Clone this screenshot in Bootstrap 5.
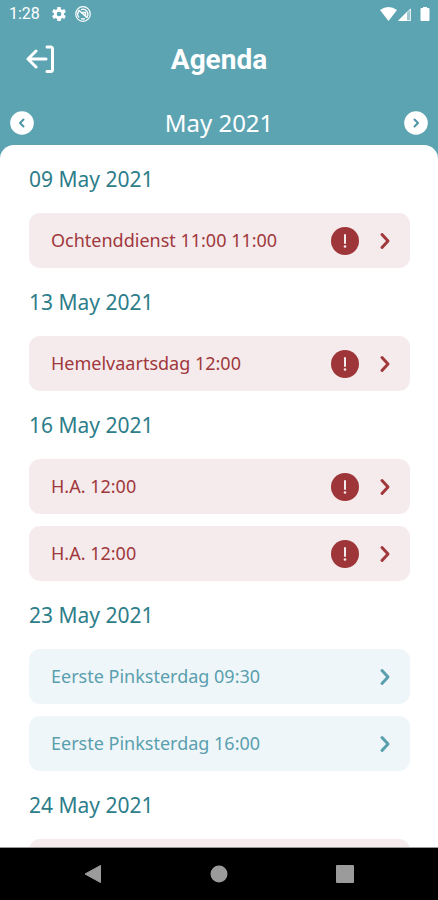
<!DOCTYPE html>
<html lang="nl">
<head>
<meta charset="utf-8">
<meta name="viewport" content="width=device-width, initial-scale=1">
<title>Agenda</title>
<link href="https://cdn.jsdelivr.net/npm/bootstrap@5.3.0/dist/css/bootstrap.min.css" rel="stylesheet">
<style>
  body { font-family: "Noto Sans", sans-serif; background: #5da4b3; }
  svg { display: block; flex: none; }
  .status-bar { height: 28px; padding: 0 8px 0 9px; font: 16px/28px Roboto, sans-serif; }
  .title-bar { display: grid; grid-template-columns: 1fr auto 1fr; height: 64px; padding: 0 26px; }
  .title-bar h1 { font: 700 28px/36px Roboto, sans-serif; }
  .month-bar { height: 53px; padding: 8px 10px 0; }
  .month-bar h2 { font-size: 24px; line-height: 32px; }
  .sheet { border-radius: 14px 14px 0 0; padding: 0 28px 0 29px; min-height: 0; }
  .day-title { height: 68px; padding-top: 20px; font-size: 21px; line-height: 28px; color: #2d7d8a; }
  .event-group { gap: 12px; }
  .event { height: 55px; border-radius: 11px; padding: 0 15px 0 22px; font-size: 18px; color: #5a9fae; background: #eff6f9; }
  .event:hover { color: #3d8a9b; }
  .event.alert-event { color: #a0383c; background: #f5ebec; }
  .system-bar { height: 53px; gap: 108px; border-top: 1px solid #999; background: #000; }
</style>
<script src="https://cdn.jsdelivr.net/npm/bootstrap@5.3.0/dist/js/bootstrap.bundle.min.js"></script>
</head>
<body>
<svg class="d-none" aria-hidden="true">
  <symbol id="chevron" viewBox="0 0 20 20"><path d="M7 3.500l6 6.500-6 6.500" fill="none" stroke="currentColor" stroke-width="3" stroke-linecap="round" stroke-linejoin="round"/></symbol>
  <symbol id="warning" viewBox="0 0 28 28"><circle cx="14" cy="14" r="14" fill="#9e3538"/><path d="M14 8v8" stroke="#f5ebec" stroke-width="2" stroke-linecap="round"/><circle cx="14" cy="19.500" r="1.300" fill="#f5ebec"/></symbol>
</svg>
<div class="vh-100 d-flex flex-column overflow-hidden">
  <header class="text-white">
    <div class="status-bar d-flex align-items-center">
      <span>1:28</span>
      <svg class="ms-2 me-1" width="22" height="20" viewBox="0 0 22 20" aria-hidden="true"><g transform="translate(11 10)" fill="#fff"><rect x="-1.800" y="-7" width="3.600" height="14" rx=".5"/><rect x="-1.800" y="-7" width="3.600" height="14" rx=".5" transform="rotate(60)"/><rect x="-1.800" y="-7" width="3.600" height="14" rx=".5" transform="rotate(120)"/><circle r="5.200"/><circle r="2.300" fill="#5da4b3"/></g></svg>
      <svg width="18" height="18" viewBox="0 0 18 18" fill="none" stroke="#fff" aria-hidden="true"><circle cx="9" cy="9" r="7.300" stroke-width="1.200"/><path d="M5 12.500A5 5 0 0 1 5 6M7 4.600A5 5 0 0 1 13 12M11 13.600A5 5 0 0 1 7 13.500" stroke-width="1.300"/><path d="M4.500 5l9 8M8 7.500h3.500v3" stroke-width="1.500"/></svg>
      <svg class="ms-auto" width="50" height="18" viewBox="0 0 50 18" aria-hidden="true"><path d="M0 5Q8.500-1 17 5L8.500 16z" fill="#fff"/><path d="M31 3v13H18z" fill="#fff" fill-opacity=".4"/><path d="M27 7v9h-9z" fill="#fff"/><path d="M30.500 4v11.500H19z" fill="none" stroke="#fff" stroke-opacity=".7"/><path d="M43 2h4v1h1.500q1 0 1 1v11q0 1-1 1h-7q-1 0-1-1V4q0-1 1-1H43z" fill="#fff"/></svg>
    </div>
    <div class="title-bar align-items-center">
      <button class="btn p-0 border-0 text-white text-start" type="button" aria-label="Uitloggen">
        <svg width="30" height="30" viewBox="0 0 30 30" fill="none" stroke="currentColor" stroke-width="3" stroke-linecap="round" stroke-linejoin="round"><path d="M21 2h3.500q2 0 2 2v20.500q0 2-2 2H21M20 14H2.500M10 6l-8 8 8 8"/></svg>
      </button>
      <h1 class="m-0">Agenda</h1>
    </div>
    <div class="month-bar d-flex justify-content-between align-items-center">
      <button class="btn p-0 border-0" type="button" aria-label="Vorige maand">
        <svg width="24" height="24" viewBox="0 0 24 24"><circle cx="12" cy="12" r="11.800" fill="#fff"/><path d="M13.500 8.500L10 12l3.500 3.500" fill="none" stroke="#5095a5" stroke-width="2" stroke-linecap="round" stroke-linejoin="round"/></svg>
      </button>
      <h2 class="m-0 fw-normal">May 2021</h2>
      <button class="btn p-0 border-0" type="button" aria-label="Volgende maand">
        <svg width="24" height="24" viewBox="0 0 24 24"><circle cx="12" cy="12" r="11.800" fill="#fff"/><path d="M10.500 8.500L14 12l-3.500 3.500" fill="none" stroke="#5095a5" stroke-width="2" stroke-linecap="round" stroke-linejoin="round"/></svg>
      </button>
    </div>
  </header>

  <main class="sheet bg-white flex-grow-1 overflow-hidden">
    <section>
      <h3 class="day-title m-0 fw-normal">09 May 2021</h3>
      <a href="#" class="event alert-event d-flex align-items-center text-decoration-none"><span class="me-auto">Ochtenddienst 11:00 11:00</span><svg class="me-3" width="28" height="28"><use href="#warning"/></svg><svg width="20" height="20"><use href="#chevron"/></svg></a>
    </section>
    <section>
      <h3 class="day-title m-0 fw-normal">13 May 2021</h3>
      <a href="#" class="event alert-event d-flex align-items-center text-decoration-none"><span class="me-auto">Hemelvaartsdag 12:00</span><svg class="me-3" width="28" height="28"><use href="#warning"/></svg><svg width="20" height="20"><use href="#chevron"/></svg></a>
    </section>
    <section>
      <h3 class="day-title m-0 fw-normal">16 May 2021</h3>
      <div class="d-grid event-group">
        <a href="#" class="event alert-event d-flex align-items-center text-decoration-none"><span class="me-auto">H.A. 12:00</span><svg class="me-3" width="28" height="28"><use href="#warning"/></svg><svg width="20" height="20"><use href="#chevron"/></svg></a>
        <a href="#" class="event alert-event d-flex align-items-center text-decoration-none"><span class="me-auto">H.A. 12:00</span><svg class="me-3" width="28" height="28"><use href="#warning"/></svg><svg width="20" height="20"><use href="#chevron"/></svg></a>
      </div>
    </section>
    <section>
      <h3 class="day-title m-0 fw-normal">23 May 2021</h3>
      <div class="d-grid event-group">
        <a href="#" class="event d-flex align-items-center text-decoration-none"><span class="me-auto">Eerste Pinksterdag 09:30</span><svg width="20" height="20"><use href="#chevron"/></svg></a>
        <a href="#" class="event d-flex align-items-center text-decoration-none"><span class="me-auto">Eerste Pinksterdag 16:00</span><svg width="20" height="20"><use href="#chevron"/></svg></a>
      </div>
    </section>
    <section>
      <h3 class="day-title m-0 fw-normal">24 May 2021</h3>
      <div class="event alert-event"></div>
    </section>
  </main>

  <nav class="system-bar d-flex justify-content-center align-items-center flex-shrink-0" aria-label="Systeem">
    <button class="btn p-0 border-0" type="button" aria-label="Terug"><svg width="18" height="20" viewBox="0 0 18 20"><path d="M1 10L16.500 1.500v17z" fill="#9b9b9b" stroke="#9b9b9b" stroke-linejoin="round"/></svg></button>
    <button class="btn p-0 border-0" type="button" aria-label="Start"><svg width="18" height="18" viewBox="0 0 18 18"><circle cx="9" cy="9" r="8.500" fill="#9b9b9b"/></svg></button>
    <button class="btn p-0 border-0" type="button" aria-label="Overzicht"><svg width="18" height="18" viewBox="0 0 18 18"><rect width="18" height="18" rx="1" fill="#9b9b9b"/></svg></button>
  </nav>
</div>
</body>
</html>
